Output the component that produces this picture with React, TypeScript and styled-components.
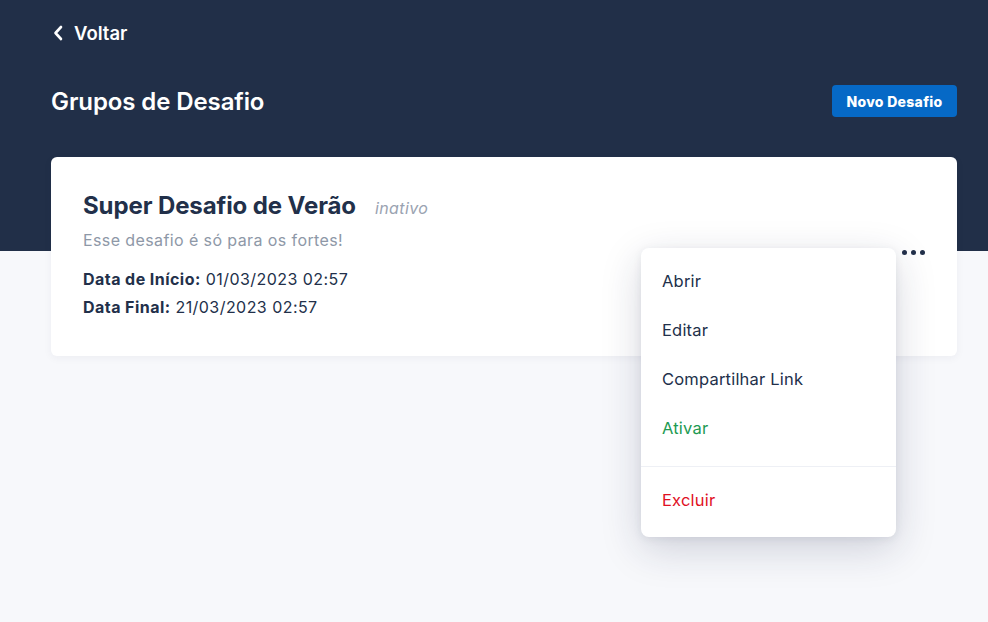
import React, { ReactElement } from 'react';
import styled, { createGlobalStyle } from 'styled-components';

const GlobalStyle = createGlobalStyle`
  body {
    margin: 0;
    background-color: #f7f8fb;
    font-family: Inter, Lato, sans-serif;
    -webkit-font-smoothing: antialiased;
  }
`;

const Page = styled.main`
  background: linear-gradient(#212f48 0, #212f48 251px, #f7f8fb 251px);
  min-height: 622px;
  padding: 22px 31px 0 51px;
  box-sizing: border-box;
`;

const Back = styled.a`
  align-items: center;
  color: white;
  display: inline-flex;
  font-size: 18.5px;
  font-weight: 600;
  gap: 11px;
  padding-left: 2px;
  text-decoration: none;
  cursor: pointer;
`;

const TitleRow = styled.div`
  align-items: center;
  display: flex;
  justify-content: space-between;
  margin-top: 40px;
`;

const H1 = styled.h1`
  color: white;
  font-size: 24px;
  font-weight: 600;
  letter-spacing: -0.1px;
  margin: 0;
`;

const Button = styled.button`
  background-color: #0669c6;
  border: none;
  border-radius: 4px;
  color: white;
  cursor: pointer;
  font-family: inherit;
  font-size: 14px;
  font-weight: 800;
  height: 32px;
  letter-spacing: 0.3px;
  padding: 0;
  width: 125px;
`;

const Card = styled.section`
  align-items: center;
  background-color: white;
  border-radius: 6px;
  box-shadow: 0 2px 8px rgba(30, 40, 70, 0.05);
  display: flex;
  justify-content: space-between;
  margin-top: 40px;
  min-height: 199px;
  padding: 0 32px;
  box-sizing: border-box;
`;

const Info = styled.div`
  display: flex;
  flex-direction: column;
  margin-top: -1px;
`;

const NameRow = styled.div`
  align-items: baseline;
  display: flex;
  gap: 19px;
`;

const Name = styled.h2`
  color: #22304a;
  font-size: 24px;
  font-weight: 700;
  letter-spacing: -0.1px;
  margin: 0;
`;

const Status = styled.span`
  color: #9aa3b1;
  font-size: 16px;
  font-style: italic;
  letter-spacing: 0.4px;
`;

const Description = styled.p`
  color: #8e98a7;
  font-size: 16px;
  letter-spacing: 0.4px;
  margin: 10px 0 15px;
`;

const DateLine = styled.div`
  color: #22304a;
  font-size: 16px;
  letter-spacing: 0.45px;
  line-height: 28px;
  & b {
    font-weight: 700;
  }
`;

const MenuAnchor = styled.div`
  margin-top: -8px;
  position: relative;
`;

const Dots = styled.button`
  background: none;
  border: none;
  cursor: pointer;
  display: flex;
  gap: 4px;
  padding: 0;
  & span {
    background-color: #22304a;
    border-radius: 50%;
    display: block;
    height: 5px;
    width: 5px;
  }
`;

const Menu = styled.ul`
  background-color: white;
  border-radius: 8px;
  box-shadow: 0 12px 40px rgba(30, 35, 70, 0.18), 0 2px 8px rgba(30, 35, 70, 0.08);
  list-style: none;
  margin: 0;
  padding: 8px 0 0;
  position: absolute;
  right: 29px;
  top: -2px;
  width: 255px;
  z-index: 2;
`;

const Group = styled.div<{ $last?: boolean }>`
  border-top: ${(p) => (p.$last ? '1px solid #eef0f5' : 'none')};
  padding: ${(p) => (p.$last ? '8px 0 13px' : '0 0 14px')};
`;

const Item = styled.li<{ $tone?: 'green' | 'red' }>`
  align-items: center;
  color: ${(p) => (p.$tone === 'green' ? '#1d9a52' : p.$tone === 'red' ? '#e0101f' : '#22304a')};
  cursor: pointer;
  display: flex;
  font-size: 16.5px;
  height: 49px;
  letter-spacing: 0.2px;
  padding-left: 21px;
`;

const App = (): ReactElement => (
  <Page>
    <GlobalStyle />
    <Back>
      <svg width='10' height='16' viewBox='0 0 10 16' fill='none'>
        <path d='M8 2L2.5 8L8 14' stroke='white' strokeWidth='2.6' strokeLinecap='round' strokeLinejoin='round' />
      </svg>
      Voltar
    </Back>
    <TitleRow>
      <H1>Grupos de Desafio</H1>
      <Button>Novo Desafio</Button>
    </TitleRow>
    <Card>
      <Info>
        <NameRow>
          <Name>Super Desafio de Verão</Name>
          <Status>inativo</Status>
        </NameRow>
        <Description>Esse desafio é só para os fortes!</Description>
        <DateLine>
          <b>Data de Início:</b> 01/03/2023 02:57
        </DateLine>
        <DateLine>
          <b>Data Final:</b> 21/03/2023 02:57
        </DateLine>
      </Info>
      <MenuAnchor>
        <Dots aria-label='mais opções'>
          <span />
          <span />
          <span />
        </Dots>
        <Menu>
          <Group>
            <Item>Abrir</Item>
            <Item>Editar</Item>
            <Item>Compartilhar Link</Item>
            <Item $tone='green'>Ativar</Item>
          </Group>
          <Group $last>
            <Item $tone='red'>Excluir</Item>
          </Group>
        </Menu>
      </MenuAnchor>
    </Card>
  </Page>
);

export default App;
